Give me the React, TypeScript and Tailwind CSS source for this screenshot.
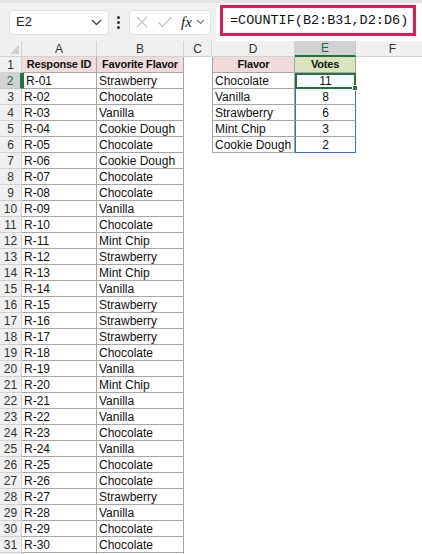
import React from "react";

const responses: string[] = [
  "Strawberry", "Chocolate", "Vanilla", "Cookie Dough", "Chocolate",
  "Cookie Dough", "Chocolate", "Chocolate", "Vanilla", "Chocolate",
  "Mint Chip", "Strawberry", "Mint Chip", "Vanilla", "Strawberry",
  "Strawberry", "Strawberry", "Chocolate", "Vanilla", "Mint Chip",
  "Vanilla", "Vanilla", "Chocolate", "Vanilla", "Chocolate",
  "Chocolate", "Strawberry", "Vanilla", "Chocolate", "Chocolate",
];

const summary: [string, number][] = [
  ["Chocolate", 11],
  ["Vanilla", 8],
  ["Strawberry", 6],
  ["Mint Chip", 3],
  ["Cookie Dough", 2],
];

const cols = ["A", "B", "C", "D", "E", "F"];

const FormulaBar = () => (
  <div className="h-[41px] bg-[#f0f0f0] border-t-[3px] border-[#e3e3e3] flex items-center relative">
    <div className="ml-[9px] w-[100px] h-[25px] bg-white rounded-[4px] border border-[#e2e2e2] flex items-center justify-between pl-[6px] pr-[6px]">
      <span className="text-[13px] text-[#222]">E2</span>
      <svg width="11" height="7" viewBox="0 0 11 7" fill="none" stroke="#444" strokeWidth="1.3">
        <path d="M1 1l4.5 4.5L10 1" />
      </svg>
    </div>
    <div className="ml-[8px] flex flex-col gap-[2px]">
      <span className="w-[3px] h-[3px] bg-[#333] rounded-full" />
      <span className="w-[3px] h-[3px] bg-[#333] rounded-full" />
      <span className="w-[3px] h-[3px] bg-[#333] rounded-full" />
    </div>
    <div className="ml-[9px] w-[82px] h-[25px] bg-white rounded-[4px] border border-[#e2e2e2] flex items-center pl-[5px] gap-[8px]">
      <svg width="14" height="14" viewBox="0 0 14 14" stroke="#c4c4c4" strokeWidth="1.3">
        <path d="M2 2l10 10M12 2L2 12" />
      </svg>
      <svg width="16" height="14" viewBox="0 0 16 14" fill="none" stroke="#c4c4c4" strokeWidth="1.3">
        <path d="M1.5 7.5l4 4L14.5 2" />
      </svg>
      <span className="flex items-center">
        <span className="text-[15px] italic text-[#222] leading-none" style={{ fontFamily: '"Liberation Serif", serif' }}>
          fx
        </span>
        <svg className="ml-[4px]" width="9" height="6" viewBox="0 0 9 6" fill="none" stroke="#777" strokeWidth="1.1">
          <path d="M1 1l3.5 3.5L8 1" />
        </svg>
      </span>
    </div>
    <div className="ml-[5px] flex-1 h-full bg-white pt-[1px]">
      <div className="ml-[4px] mt-[1px] w-[196px] h-[31px] border-[3px] border-[#e31a4f] flex items-center pl-[7px]">
        <span className="text-[13.5px] text-[#111] leading-none" style={{ fontFamily: '"Liberation Mono", monospace' }}>
          =COUNTIF(B2:B31,D2:D6)
        </span>
      </div>
    </div>
  </div>
);

export default function App() {
  const rows = Array.from({ length: 32 }, (_, i) => i + 1);
  const dataBorder = "border-r border-b border-[#a6a6a6]";
  const head = "font-bold text-[11px] tracking-[-0.2px] whitespace-nowrap flex items-center justify-center";

  return (
    <div
      className="w-[422px] h-[554px] overflow-hidden bg-white text-[12px] text-[#111]"
      style={{ fontFamily: '"Liberation Sans", Arial, sans-serif' }}
    >
      <FormulaBar />
      <div className="grid grid-cols-[22px_75px_87px_28px_83px_61px_74px] grid-rows-[16px] auto-rows-[16px] leading-none">
        <div className="bg-[#f0f0f0] border-r border-b border-[#d2d2d2] relative">
          <svg className="absolute right-[2px] bottom-[2px]" width="9" height="9" viewBox="0 0 9 9">
            <path d="M9 0V9H0Z" fill="#d0d0d0" />
          </svg>
        </div>
        {cols.map((c) => (
          <div
            key={c}
            className={
              c === "E"
                ? "bg-[#d2d2d2] text-[#1e6b41] border-r border-[#c6c6c6] border-b-2 border-b-[#217346] flex items-center justify-center"
                : "bg-[#f0f0f0] text-[#333] border-r border-b border-[#d2d2d2] flex items-center justify-center"
            }
          >
            {c}
          </div>
        ))}
        {rows.map((r) => {
          const idx = r - 2;
          const sum = idx >= 0 && idx < 5 ? summary[idx] : null;
          return (
            <React.Fragment key={r}>
              <div
                className={
                  r === 2
                    ? "bg-[#d2d2d2] text-[#1e6b41] border-r-2 border-r-[#217346] border-b border-[#c6c6c6] flex items-center justify-center"
                    : "bg-[#f0f0f0] text-[#333] border-r border-b border-[#d2d2d2] flex items-center justify-center"
                }
              >
                {r <= 31 ? r : ""}
              </div>
              {r === 1 ? (
                <>
                  <div className={`${dataBorder} bg-[#f2dcdb] ${head}`}>Response ID</div>
                  <div className={`${dataBorder} bg-[#f2dcdb] ${head}`}>Favorite Flavor</div>
                  <div />
                  <div className={`${dataBorder} border-l bg-[#f2dcdb] ${head}`}>Flavor</div>
                  <div className={`${dataBorder} bg-[#d8e4bc] ${head}`}>Votes</div>
                  <div />
                </>
              ) : r <= 31 ? (
                <>
                  <div className={`${dataBorder} ${r === 2 ? "border-l-2 border-l-[#217346]" : ""} flex items-center pl-[2px]`}>
                    R-{String(r - 1).padStart(2, "0")}
                  </div>
                  <div className={`${dataBorder} flex items-center pl-[2px]`}>{responses[r - 2]}</div>
                  <div />
                  {sum ? (
                    <>
                      <div className={`${dataBorder} border-l flex items-center pl-[2px] whitespace-nowrap`}>{sum[0]}</div>
                      <div
                        className={
                          r === 2
                            ? "relative border-2 border-[#217346] flex items-center justify-center"
                            : `border-x border-[#2e6fd0] ${r === 6 ? "border-b border-b-[#2e6fd0]" : "border-b border-b-[#a6a6a6]"} flex items-center justify-center`
                        }
                      >
                        {sum[1]}
                        {r === 2 && (
                          <span className="absolute right-[-4px] bottom-[-4px] w-[6px] h-[6px] bg-[#217346] border border-white" />
                        )}
                      </div>
                    </>
                  ) : (
                    <>
                      <div />
                      <div />
                    </>
                  )}
                  <div />
                </>
              ) : (
                <>
                  <div className="border-r border-[#a6a6a6]" />
                  <div className="border-r border-[#a6a6a6]" />
                  <div />
                  <div />
                  <div />
                  <div />
                </>
              )}
            </React.Fragment>
          );
        })}
      </div>
    </div>
  );
}
